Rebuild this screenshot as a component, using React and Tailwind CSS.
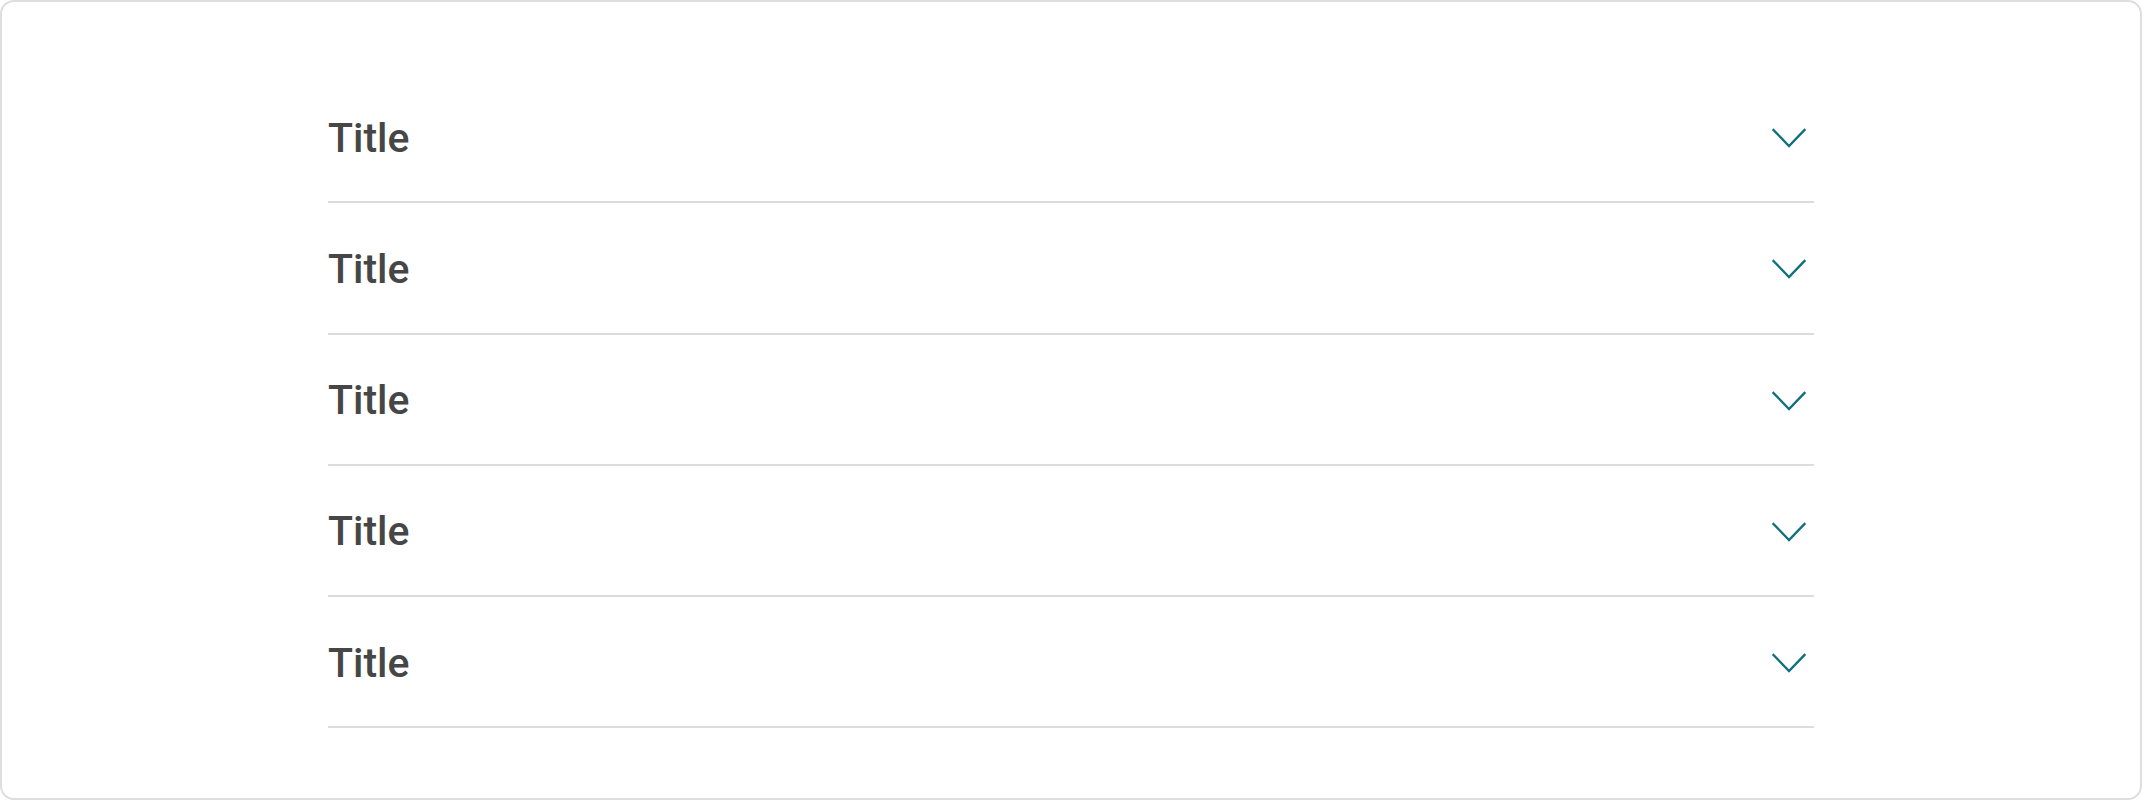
export default function App() {
  const rows = [0, 1, 2, 3, 4];
  return (
    <div className="w-[2142px] h-[800px] bg-white">
      <div className="w-full h-full border-2 border-[#dedede] rounded-[14px] pt-[70px]">
        <div className="w-[1486px] mx-auto flex flex-col">
          {rows.map((i) => (
            <div
              key={i}
              className="h-[131.25px] border-b-2 border-[#dcdcdc] flex items-center justify-between"
            >
              <span
                className="text-[41px] font-medium text-[#464646] leading-none mt-[3px]"
                style={{ fontFamily: 'Roboto, "Noto Sans", sans-serif' }}
              >
                Title
              </span>
              <svg
                width="36"
                height="22"
                viewBox="0 0 36 22"
                className="mr-[7px] mt-[5px]"
                fill="none"
              >
                <path
                  d="M2.5 2 L18 18 L33.5 2"
                  stroke="#0e6f7e"
                  strokeWidth="2.3"
                  strokeLinecap="square"
                />
              </svg>
            </div>
          ))}
        </div>
      </div>
    </div>
  );
}
